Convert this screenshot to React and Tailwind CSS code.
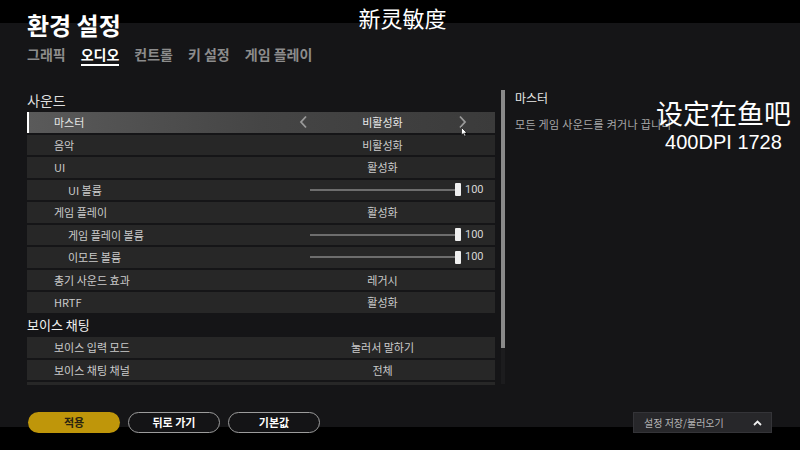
import React from 'react';

const KR = { fontFamily: '"Noto Sans CJK KR", "Noto Sans", sans-serif' };

const tabs = ['그래픽', '오디오', '컨트롤', '키 설정', '게임 플레이'];

const Row = ({ label, indent, value, slider, active }) => (
    <div
        className={
            'flex h-[20.5px] shrink-0 items-center text-[11px] text-[#cbcbcb] ' +
            (active
                ? 'border-l-2 border-white bg-[linear-gradient(to_right,#5a5a5a,#454545_50%,#3b3b3b)]'
                : 'bg-[#272727]')
        }
    >
        <span className={'flex-1 ' + (indent ? 'pl-[41px]' : 'pl-[27px]') + (active ? ' -ml-[2px] text-[#e6e6e6]' : '')}>{label}</span>
        {slider ? (
            <div className="flex items-center pr-[12px]">
                <div className="flex w-[151px] items-center">
                    <div className="h-[2px] flex-1 bg-[#6d6d6d]" />
                    <div className="h-[13px] w-[6px] rounded-[1px] bg-[#f0f0f0]" />
                </div>
                <span className="ml-[4px] w-[18px] font-['Roboto'] text-[11px] text-[#d6d6d6]">100</span>
            </div>
        ) : (
            <div className="relative mr-[20px] flex w-[185px] items-center justify-center">
                {active && (
                    <svg className="absolute left-[9px]" width="9" height="14" viewBox="0 0 9 14">
                        <path d="M7 1.5 L2 7 L7 12.5" stroke="#9a9a9a" strokeWidth="1.8" fill="none" />
                    </svg>
                )}
                <span className={active ? 'text-[#e8e8e8]' : ''}>{value}</span>
                {active && (
                    <svg className="absolute right-[8px]" width="9" height="14" viewBox="0 0 9 14">
                        <path d="M2 1.5 L7 7 L2 12.5" stroke="#9a9a9a" strokeWidth="1.8" fill="none" />
                    </svg>
                )}
                {active && (
                    <svg className="absolute right-[7px] top-[13px]" width="7" height="10" viewBox="0 0 7 10">
                        <path d="M0.5 0.5 L0.5 8 L2.3 6.4 L3.6 9.3 L4.8 8.8 L3.6 6 L6 6 Z" fill="#fff" stroke="#000" strokeWidth="0.6" />
                    </svg>
                )}
            </div>
        )}
    </div>
);

const Section = ({ title }) => (
    <div className="flex h-[20.5px] shrink-0 items-center text-[13px] text-[#f0f0f0]">{title}</div>
);

export default function App() {
    return (
        <div
            className="relative flex h-[450px] w-[800px] flex-col overflow-hidden bg-[linear-gradient(to_bottom,#000_23px,#151517_23px,#151517_427px,#000_427px)]"
            style={KR}
        >
            {/* header */}
            <div className="relative flex h-[39px] shrink-0 items-end px-[27px]">
                <h1 className="text-[24px] font-bold leading-[28px] text-white">환경 설정</h1>
                <div className="absolute left-0 right-0 top-[3px] pl-[5px] text-center font-['Noto_Sans_CJK_SC'] text-[22px] leading-[28px] text-white">
                    新灵敏度
                </div>
            </div>

            {/* tabs */}
            <div className="mt-[7px] flex h-[20px] shrink-0 gap-[15px] px-[27px] text-[14px] font-bold leading-[16px]">
                {tabs.map((t) => (
                    <div
                        key={t}
                        className={t === '오디오' ? 'border-b-2 border-white text-white' : 'text-[#8c8c8c]'}
                    >
                        {t}
                    </div>
                ))}
            </div>

            {/* content */}
            <div className="mt-[24px] flex shrink-0">
                <div className="ml-[27px] flex h-[295px] w-[468px] flex-col gap-[2px] overflow-hidden">
                    <div className="flex h-[20px] shrink-0 items-center text-[14px] text-[#dedede]">사운드</div>
                    <Row label="마스터" value="비활성화" active />
                    <Row label="음악" value="비활성화" />
                    <Row label="UI" value="활성화" />
                    <Row label="UI 볼륨" indent slider />
                    <Row label="게임 플레이" value="활성화" />
                    <Row label="게임 플레이 볼륨" indent slider />
                    <Row label="이모트 볼륨" indent slider />
                    <Row label="총기 사운드 효과" value="레거시" />
                    <Row label="HRTF" value="활성화" />
                    <Section title="보이스 채팅" />
                    <Row label="보이스 입력 모드" value="눌러서 말하기" />
                    <Row label="보이스 채팅 채널" value="전체" />
                    <Row label="" value="" />
                </div>

                {/* scrollbar */}
                <div className="ml-[6px] flex h-[294px] w-[4px] flex-col bg-[#1c1c1e]">
                    <div className="h-[258px] bg-[#8a8a8a]" />
                </div>

                {/* description */}
                <div className="relative ml-[10px] flex-1">
                    <div className="pt-[1px] text-[12px] leading-[14px] text-[#e8e8e8]">마스터</div>
                    <div className="mt-[12px] text-[11px] leading-[14px] tracking-[0.3px] text-[#a8a8a8]">
                        모든 게임 사운드를 켜거나 끕니다
                    </div>
                    <div className="absolute left-[141px] top-[6px] flex flex-col items-center">
                        <span className="font-['Noto_Sans_CJK_SC'] text-[27px] leading-[34px] text-white">
                            设定在鱼吧
                        </span>
                        <span className="mt-[1px] font-['Liberation_Sans'] text-[20px] leading-[22px] text-white">
                            400DPI 1728
                        </span>
                    </div>
                </div>
            </div>

            {/* footer */}
            <div className="mt-auto mb-[17px] flex items-center px-[28px]">
                <div className="flex gap-[8px] text-[11px] font-bold">
                    <button className="h-[21px] w-[92px] rounded-full bg-[#bf960a] text-[#2a2410]">적용</button>
                    <button className="h-[21px] w-[92px] rounded-full border border-[#9c9c9c] bg-[#141416] text-white">
                        뒤로 가기
                    </button>
                    <button className="h-[21px] w-[92px] rounded-full border border-[#9c9c9c] bg-[#141416] text-white">
                        기본값
                    </button>
                </div>
                <div className="ml-auto flex h-[21px] w-[139px] items-center justify-between border border-[#343438] bg-[#27272a] pl-[10px] pr-[9px] text-[10px] text-[#b4b4b4]">
                    <span>설정 저장/불러오기</span>
                    <svg width="9" height="6" viewBox="0 0 9 6">
                        <path d="M1 5 L4.5 1.5 L8 5" stroke="#f0f0f0" strokeWidth="1.8" fill="none" />
                    </svg>
                </div>
            </div>
        </div>
    );
}
